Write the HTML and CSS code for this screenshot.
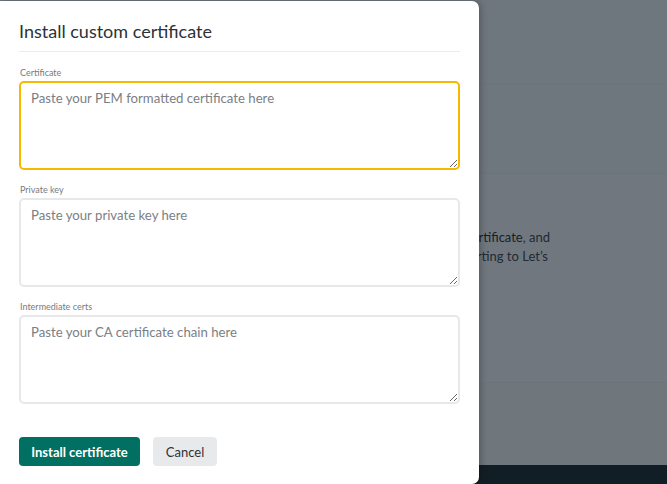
FILE: index.html
```html
<!DOCTYPE html>
<html>
<head>
<meta charset="utf-8">
<link rel="stylesheet" href="styles.css">
</head>
<body>
<div class="page">
  <div class="band band-top"></div>
  <div class="band band-mid"></div>
  <div class="band band-main">
    <p class="bg-text"><span class="bg-line">Upload your own <span class="bg-link">custom certificate</span>, and</span><span class="bg-line bg-line-2">we will stop automatically renewing and reverting to Let’s</span></p>
  </div>
  <div class="band band-low"></div>
  <div class="footer"></div>
</div>
<div class="overlay"></div>
<div class="modal">
  <h2 class="modal-title">Install custom certificate</h2>
  <div class="field">
    <label class="field-label">Certificate</label>
    <textarea class="field-input is-focused" placeholder="Paste your PEM formatted certificate here" autofocus></textarea>
  </div>
  <div class="field">
    <label class="field-label">Private key</label>
    <textarea class="field-input" placeholder="Paste your private key here"></textarea>
  </div>
  <div class="field">
    <label class="field-label">Intermediate certs</label>
    <textarea class="field-input" placeholder="Paste your CA certificate chain here"></textarea>
  </div>
  <div class="actions">
    <button class="btn btn-primary">Install certificate</button>
    <button class="btn btn-secondary">Cancel</button>
  </div>
</div>
</body>
</html>
```
FILE: styles.css
```css
* { box-sizing: border-box; }
html, body { margin: 0; padding: 0; }
body {
  width: 667px;
  height: 484px;
  overflow: hidden;
  font-family: Lato, "Open Sans", sans-serif;
  background: #ffffff;
  position: relative;
}
.page {
  display: flex;
  flex-direction: column;
  height: 484px;
  background: #ebeff2;
}
.band { border-bottom: 1px solid #e4e8eb; }
.band-top { height: 84px; background: #ebeff2; }
.band-mid { height: 90px; background: #ebeff2; }
.band-main { height: 209px; background: #edf0f3; padding-top: 54px; }
.band-low { flex: 1; background: #eaeff0; border-bottom: none; }
.footer { height: 19px; background: #031214; }
.bg-text {
  margin: 0 0 0 150px;
  width: 400px;
  text-align: right;
  font-size: 13px;
  line-height: 19px;
  color: #2b3035;
  white-space: nowrap;
}
.bg-line { display: block; }
.bg-line-2 { padding-right: 2px; }
.bg-link { color: #0e1215; }
.overlay {
  position: absolute;
  inset: 0;
  background: rgba(28, 38, 48, 0.6);
}
.modal {
  position: absolute;
  left: 0;
  top: 1px;
  width: 479px;
  height: 483px;
  background: #ffffff;
  border-radius: 0 7px 7px 0;
  box-shadow: 2px 0 6px rgba(0, 0, 0, 0.25);
  padding: 0 19px;
  display: flex;
  flex-direction: column;
}
.modal-title {
  margin: 0;
  padding: 20px 0 10px;
  font-size: 18px;
  line-height: 20px;
  font-weight: 400;
  color: #2d3237;
  border-bottom: 1px solid #ececec;
}
.field {
  display: flex;
  flex-direction: column;
  margin-top: 15px;
}
.field + .field { margin-top: 14px; }
.field-label {
  font-size: 9px;
  line-height: 12px;
  color: #767b80;
  padding-left: 1px;
  margin-bottom: 2px;
}
.field-input {
  height: 89px;
  resize: vertical;
  border: 2px solid #e7e8e9;
  border-radius: 5px;
  padding: 6px 10px;
  font-family: inherit;
  font-size: 13.2px;
  line-height: 18px;
  color: #2d3237;
  caret-color: #2d3237;
  outline: none;
}
.field-input::placeholder { color: #7b8085; }
.field-input.is-focused { border-color: #f5b900; }
.actions {
  display: flex;
  gap: 13px;
  margin-top: 33px;
}
.btn {
  height: 29px;
  border: none;
  border-radius: 4px;
  font-family: inherit;
  font-size: 13px;
  padding: 0 12px;
}
.btn-primary {
  background: #016f62;
  color: #ffffff;
  font-weight: 700;
  width: 121px;
}
.btn-secondary {
  background: #e8e9ea;
  color: #2d3237;
  width: 64px;
}
```
